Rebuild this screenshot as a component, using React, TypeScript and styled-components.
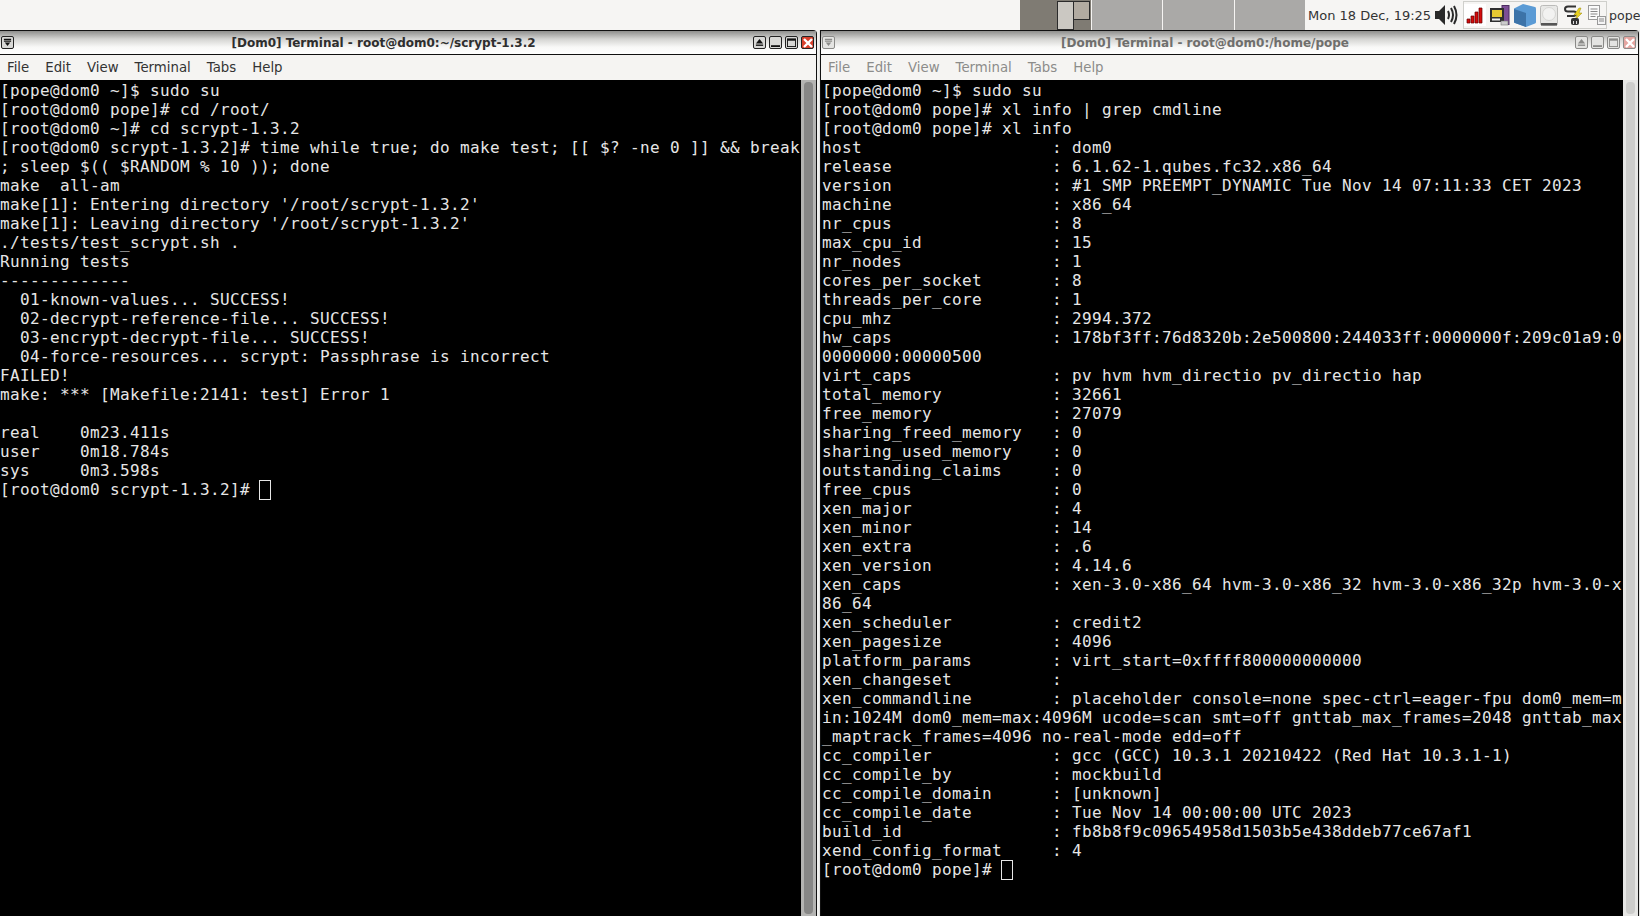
import React from 'react'
import styled, { createGlobalStyle } from 'styled-components'

const GlobalStyle = createGlobalStyle`
  html, body { margin: 0; padding: 0; background: #000; overflow: hidden; }
  #root { width: 1640px; height: 916px; }
`

const leftLines = `[pope@dom0 ~]$ sudo su
[root@dom0 pope]# cd /root/
[root@dom0 ~]# cd scrypt-1.3.2
[root@dom0 scrypt-1.3.2]# time while true; do make test; [[ $? -ne 0 ]] && break
; sleep $(( $RANDOM % 10 )); done
make  all-am
make[1]: Entering directory '/root/scrypt-1.3.2'
make[1]: Leaving directory '/root/scrypt-1.3.2'
./tests/test_scrypt.sh .
Running tests
-------------
  01-known-values... SUCCESS!
  02-decrypt-reference-file... SUCCESS!
  03-encrypt-decrypt-file... SUCCESS!
  04-force-resources... scrypt: Passphrase is incorrect
FAILED!
make: *** [Makefile:2141: test] Error 1

real    0m23.411s
user    0m18.784s
sys     0m3.598s
[root@dom0 scrypt-1.3.2]# `

const rightLines = `[pope@dom0 ~]$ sudo su
[root@dom0 pope]# xl info | grep cmdline
[root@dom0 pope]# xl info
host                   : dom0
release                : 6.1.62-1.qubes.fc32.x86_64
version                : #1 SMP PREEMPT_DYNAMIC Tue Nov 14 07:11:33 CET 2023
machine                : x86_64
nr_cpus                : 8
max_cpu_id             : 15
nr_nodes               : 1
cores_per_socket       : 8
threads_per_core       : 1
cpu_mhz                : 2994.372
hw_caps                : 178bf3ff:76d8320b:2e500800:244033ff:0000000f:209c01a9:0
0000000:00000500
virt_caps              : pv hvm hvm_directio pv_directio hap
total_memory           : 32661
free_memory            : 27079
sharing_freed_memory   : 0
sharing_used_memory    : 0
outstanding_claims     : 0
free_cpus              : 0
xen_major              : 4
xen_minor              : 14
xen_extra              : .6
xen_version            : 4.14.6
xen_caps               : xen-3.0-x86_64 hvm-3.0-x86_32 hvm-3.0-x86_32p hvm-3.0-x
86_64
xen_scheduler          : credit2
xen_pagesize           : 4096
platform_params        : virt_start=0xffff800000000000
xen_changeset          :
xen_commandline        : placeholder console=none spec-ctrl=eager-fpu dom0_mem=m
in:1024M dom0_mem=max:4096M ucode=scan smt=off gnttab_max_frames=2048 gnttab_max
_maptrack_frames=4096 no-real-mode edd=off
cc_compiler            : gcc (GCC) 10.3.1 20210422 (Red Hat 10.3.1-1)
cc_compile_by          : mockbuild
cc_compile_domain      : [unknown]
cc_compile_date        : Tue Nov 14 00:00:00 UTC 2023
build_id               : fb8b8f9c09654958d1503b5e438ddeb77ce67af1
xend_config_format     : 4
[root@dom0 pope]# `

const Desktop = styled.div`
  width: 1640px;
  height: 916px;
  display: flex;
  flex-direction: column;
  overflow: hidden;
  font-family: "DejaVu Sans", sans-serif;
`

const Panel = styled.div`
  height: 30px;
  flex: none;
  display: flex;
  align-items: center;
  background: #f6f5f3;
  color: #333;
  font-size: 13px;
  overflow: hidden;
`

const Pager = styled.div`
  display: flex;
  flex: none;
  height: 30px;
  margin-left: 1020px;
`

const Workspace = styled.div<{ $active?: boolean }>`
  position: relative;
  width: 71.5px;
  height: 100%;
  background: ${p => (p.$active ? '#7f7b73' : '#aaa9a7')};
  border-right: 1px solid #f6f5f3;
  box-sizing: border-box;
`

const PagerWin = styled.div<{ $back?: boolean }>`
  position: absolute;
  top: 1px;
  left: ${p => (p.$back ? '53px' : '37px')};
  width: 17px;
  height: ${p => (p.$back ? '19px' : '29px')};
  background: ${p => (p.$back ? '#b2aba1' : '#cbc8c2')};
  border: 1px solid #2b2b2b;
  box-sizing: border-box;
`

const Clock = styled.span`
  flex: none;
  margin-left: 2px;
  white-space: nowrap;
`

const Tray = styled.div`
  display: flex;
  flex: none;
  align-items: center;
  gap: 4px;
  width: 144px;
  height: 28px;
  margin: 0 2px 0 5px;
  border: 1px solid #cfcfcb;
  box-sizing: border-box;
`

const UserName = styled.span`
  flex: none;
  font-size: 12.6px;
  white-space: nowrap;
`

const Windows = styled.div`
  flex: 1;
  display: flex;
  min-height: 0;
`

const Frame = styled.div<{ $right?: boolean }>`
  width: ${p => (p.$right ? '821px' : '819px')};
  flex: none;
  display: flex;
  box-sizing: border-box;
  padding: ${p => (p.$right ? '0 1px' : '0 2px 0 0')};
  background: ${p => (p.$right ? '#e4e4e2' : '#f0f0ee')};
`

const Win = styled.div<{ $right?: boolean }>`
  flex: 1;
  min-width: 0;
  display: flex;
  flex-direction: column;
  box-sizing: border-box;
  border-top: 1px solid #111;
  border-right: 1px solid #111;
  border-left: ${p => (p.$right ? '1px solid #111' : 'none')};
  border-top-right-radius: 4px;
  background: #f5f4f2;
`

const TitleBar = styled.div<{ $dim?: boolean }>`
  height: 24px;
  flex: none;
  display: flex;
  align-items: center;
  box-sizing: border-box;
  padding: 0 2px 0 1px;
  background: linear-gradient(to bottom, #8f8f8d 0%, #d4d4d2 35%, #f8f8f7 70%, #fff 100%);
  border-bottom: 1px solid #111;
  color: ${p => (p.$dim ? '#6f6f6d' : '#2e2e2e')};
`

const Title = styled.div`
  flex: 1;
  text-align: center;
  font-size: 12px;
  font-weight: 700;
  white-space: nowrap;
`

const WinButtons = styled.div`
  display: flex;
  gap: 3px;
`

const WinBtn = styled.button<{ $dim?: boolean; $close?: boolean }>`
  width: 13px;
  height: 13px;
  padding: 0;
  display: flex;
  align-items: center;
  justify-content: center;
  border: 1px solid ${p => (p.$dim ? '#8a8a88' : '#222')};
  border-radius: 2px;
  background: ${p =>
    p.$close ? (p.$dim ? '#e5a5a0' : '#d9402c') : p.$dim ? '#e4e4e2' : '#d8d8d6'};
  color: ${p => (p.$dim ? '#8a8a88' : '#111')};
`

const MenuBar = styled.div<{ $dim?: boolean }>`
  height: 25px;
  flex: none;
  display: flex;
  align-items: center;
  gap: 16px;
  padding: 0 7px;
  font-size: 13.3px;
  background: #f5f4f2;
  color: ${p => (p.$dim ? '#8c8c8a' : '#333')};
`

const Body = styled.div`
  flex: 1;
  min-height: 0;
  display: flex;
  background: #000;
`

const Term = styled.pre<{ $right?: boolean }>`
  flex: 1;
  margin: 0;
  padding: 1px 0 0 ${p => (p.$right ? '1px' : '0')};
  overflow: hidden;
  color: #e6e6e6;
  font-family: "DejaVu Sans Mono", monospace;
  font-size: 16px;
  letter-spacing: 0.367px;
  line-height: 19px;
`

const Cursor = styled.span`
  display: inline-block;
  width: 10px;
  height: 18px;
  margin-left: -1px;
  vertical-align: -5px;
  border: 1px solid #e6e6e6;
`

const Scrollbar = styled.div<{ $dim?: boolean }>`
  width: 15px;
  flex: none;
  padding: 2px 3px;
  box-sizing: border-box;
  background: ${p => (p.$dim ? '#e6e6e4' : '#b4b4b2')};
`

const Thumb = styled.div<{ $dim?: boolean }>`
  width: 9px;
  height: 100%;
  border-radius: 4px;
  background: ${p => (p.$dim ? '#cdcdcb' : '#878786')};
`

const SmallIcon = styled.svg`
  display: block;
  flex: none;
`

const SpeakerIcon = styled(SmallIcon)`
  margin-left: 3px;
`

const Speaker = () => (
  <SpeakerIcon width="24" height="24" viewBox="0 0 24 24" fill="none">
    <path d="M1 8h4l6-6v20l-6-6H1z" fill="#2a2a2a" />
    <path d="M14 8q2 4 0 8M17 5q4 7 0 14M20 3q5 9 0 18" stroke="#2a2a2a" strokeWidth="2" />
  </SpeakerIcon>
)

const NetworkIcon = () => (
  <SmallIcon width="22" height="22" viewBox="0 0 22 22">
    <rect width="22" height="22" fill="#fff" />
    <path d="M3 15h3v4H3zM7 12h3v7H7zM11 8h3v11h-3zM15 4h3v15h-3z" fill="#d40c0c" stroke="#600" strokeWidth=".7" />
  </SmallIcon>
)

const DomainsIcon = () => (
  <SmallIcon width="20" height="21" viewBox="0 0 20 21">
    <rect x="12" y="0.5" width="7" height="19" fill="#7d4e96" stroke="#4d2c60" />
    <rect x="0" y="3" width="14" height="14" fill="#2f2f2f" />
    <rect x="2" y="5" width="10" height="7" fill="#e6c832" />
    <rect x="2" y="13.5" width="8" height="2" fill="#eee" />
    <rect x="11" y="16" width="7" height="4" fill="#ccc" stroke="#777" strokeWidth=".6" />
  </SmallIcon>
)

const CubeIcon = () => (
  <SmallIcon width="22" height="23" viewBox="0 0 22 23">
    <path d="M9 0 21 3q1 0 1 2v13q0 1-1 1.5L12 23 1 19q-1 0-1-1.5V5q0-1 1-1z" fill="#5b9bd5" />
    <path d="M0 5l12 4v14L1 19q-1 0-1-1.5z" fill="#3c73a8" />
  </SmallIcon>
)

const DiskIcon = () => (
  <SmallIcon width="18" height="21" viewBox="0 0 18 21">
    <rect x="0.5" y="0.5" width="17" height="20" rx="2" fill="#e8e8e6" stroke="#bbbbb9" />
    <circle cx="9" cy="9" r="6.5" fill="#f2f2f1" stroke="#d6d6d4" />
    <rect x="1" y="18" width="16" height="2.5" fill="#555" />
  </SmallIcon>
)

const PowerIcon = () => (
  <SmallIcon width="22" height="20" viewBox="0 0 22 20" fill="none">
    <path d="M14 1.5H6Q3 1.5 3 4t3 2.5h6Q14 6.5 14 8.5T12 11H5" stroke="#333" strokeWidth="2" />
    <path d="M17 3l-5 7h3l-2 5 7-7h-3l2-5z" fill="#e8d020" stroke="#9a8a10" strokeWidth=".5" />
    <rect x="9" y="13" width="8" height="7" rx="2" fill="#333" />
    <path d="M11.5 16v3M14.5 16v3" stroke="#ddd" />
  </SmallIcon>
)

const NotesIcon = () => (
  <SmallIcon width="18" height="20" viewBox="0 0 18 20">
    <rect x="0.5" y="0.5" width="11" height="14" fill="#fbfbfb" stroke="#999" />
    <path d="M2.5 4h7M2.5 6.5h7M2.5 9h7M2.5 11.5h5" stroke="#888" />
    <rect x="9.5" y="11.5" width="8" height="8" fill="#f4f4f4" stroke="#999" />
    <path d="M11 14h5M11 16h5" stroke="#888" />
  </SmallIcon>
)

const MenuGlyph = () => (
  <svg width="9" height="9" viewBox="0 0 10 10">
    <path d="M1 1.5h8M1 3.5h8" stroke="currentColor" strokeWidth="1.2" />
    <path d="M2 5h6L5 9z" fill="currentColor" />
  </svg>
)

const RollGlyph = () => (
  <svg width="9" height="9" viewBox="0 0 10 10">
    <path d="M5 1 9 6H1z" fill="currentColor" />
    <path d="M1 8h8" stroke="currentColor" strokeWidth="1.5" />
  </svg>
)

const MinGlyph = () => (
  <svg width="9" height="9" viewBox="0 0 10 10">
    <path d="M0 9h10" stroke="currentColor" strokeWidth="2" />
  </svg>
)

const MaxGlyph = () => (
  <svg width="9" height="9" viewBox="0 0 10 10" fill="none">
    <rect x=".5" y="1" width="9" height="8.5" stroke="currentColor" />
    <path d="M.5 2h9" stroke="currentColor" strokeWidth="2" />
  </svg>
)

const CloseGlyph = () => (
  <svg width="10" height="10" viewBox="0 0 10 10">
    <path d="M1 1l8 8M9 1l-8 8" stroke="#fff" strokeWidth="2.4" />
  </svg>
)

const menuItems = ['File', 'Edit', 'View', 'Terminal', 'Tabs', 'Help']

interface TerminalProps {
  title: string
  text: string
  right?: boolean
}

const TerminalWindow: React.FC<TerminalProps> = ({ title, text, right }) => (
  <Frame $right={right}>
    <Win $right={right}>
      <TitleBar $dim={right}>
        <WinBtn $dim={right}><MenuGlyph /></WinBtn>
        <Title>{title}</Title>
        <WinButtons>
          <WinBtn $dim={right}><RollGlyph /></WinBtn>
          <WinBtn $dim={right}><MinGlyph /></WinBtn>
          <WinBtn $dim={right}><MaxGlyph /></WinBtn>
          <WinBtn $dim={right} $close><CloseGlyph /></WinBtn>
        </WinButtons>
      </TitleBar>
      <MenuBar $dim={right}>
        {menuItems.map(item => <span key={item}>{item}</span>)}
      </MenuBar>
      <Body>
        <Term $right={right}>{text}<Cursor /></Term>
        <Scrollbar $dim={right}><Thumb $dim={right} /></Scrollbar>
      </Body>
    </Win>
  </Frame>
)

const App: React.FC = () => (
  <Desktop>
    <GlobalStyle />
    <Panel>
      <Pager>
        <Workspace $active>
          <PagerWin />
          <PagerWin $back />
        </Workspace>
        <Workspace />
        <Workspace />
        <Workspace />
      </Pager>
      <Clock>Mon 18 Dec, 19:25</Clock>
      <Speaker />
      <Tray>
        <NetworkIcon />
        <DomainsIcon />
        <CubeIcon />
        <DiskIcon />
        <PowerIcon />
        <NotesIcon />
      </Tray>
      <UserName>pope</UserName>
    </Panel>
    <Windows>
      <TerminalWindow title="[Dom0] Terminal - root@dom0:~/scrypt-1.3.2" text={leftLines} />
      <TerminalWindow title="[Dom0] Terminal - root@dom0:/home/pope" text={rightLines} right />
    </Windows>
  </Desktop>
)

export default App
